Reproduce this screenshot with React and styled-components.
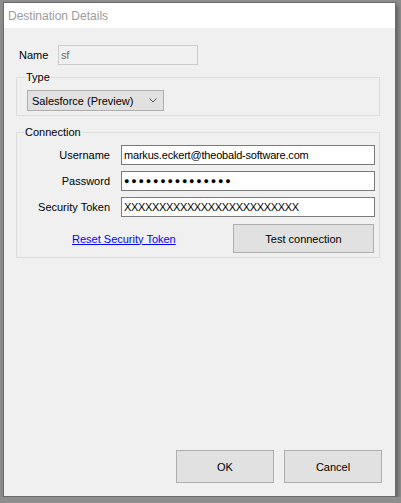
import React from "react";
import styled, { createGlobalStyle } from "styled-components";

const GlobalStyle = createGlobalStyle`
  html, body {
    margin: 0;
    padding: 0;
    background: #8e8e8e;
  }
  body {
    font-family: "Liberation Sans", Arial, sans-serif;
    font-size: 11px;
    color: #000000;
  }
`;

const Window = styled.div`
  margin: 2px 0 0 3px;
  width: 393px;
  height: 495px;
  border: 1px solid #6b6b6b;
  box-sizing: border-box;
  display: flex;
  flex-direction: column;
  box-shadow: 2px 3px 4px rgba(60, 60, 60, 0.6);
`;

const TitleBar = styled.div`
  height: 25px;
  background: #ffffff;
  display: flex;
  align-items: center;
  padding-left: 4px;
  font-size: 12px;
  color: #9b9b9b;
  flex-shrink: 0;
`;

const Client = styled.div`
  flex: 1;
  background: #f0f0f0;
  display: flex;
  flex-direction: column;
  padding: 17px 0 0 12px;
`;

const NameRow = styled.div`
  display: flex;
  align-items: center;
  padding-left: 3px;
`;

const NameLabel = styled.span`
  width: 39px;
`;

const TextBox = styled.input`
  box-sizing: border-box;
  width: ${(p) => p.$width || 254}px;
  height: 20px;
  margin: 0;
  padding: 0 2px;
  font-family: "Liberation Sans", Arial, sans-serif;
  font-size: ${(p) => (p.$dots ? "9px" : "11px")};
  letter-spacing: ${(p) => (p.$dots ? "1.8px" : p.$tight ? "-0.35px" : "-0.2px")};
  color: ${(p) => (p.disabled ? "#6d6d6d" : "#000000")};
  background: ${(p) => (p.disabled ? "#f0f0f0" : "#ffffff")};
  border: 1px solid ${(p) => (p.disabled ? "#cccccc" : "#7a7a7a")};
  outline: none;
`;

const Group = styled.div`
  position: relative;
  box-sizing: border-box;
  width: 364px;
  height: ${(p) => p.$height}px;
  margin-top: ${(p) => p.$top}px;
  border: 1px solid #dcdcdc;
`;

const Legend = styled.span`
  position: absolute;
  top: -8px;
  left: ${(p) => p.$left}px;
  padding: 0 1px;
  background: #f0f0f0;
  line-height: 14px;
`;

const Select = styled.div`
  box-sizing: border-box;
  width: 137px;
  height: 21px;
  margin: 12px 0 0 10px;
  background: #e1e1e1;
  border: 1px solid #adadad;
  display: flex;
  align-items: center;
  justify-content: space-between;
  padding: 0 6px 0 4px;
`;

const FieldGrid = styled.div`
  display: grid;
  grid-template-columns: 93px 254px;
  column-gap: 11px;
  row-gap: 6px;
  margin-top: 12px;
  align-items: center;
`;

const FieldLabel = styled.span`
  text-align: right;
`;

const ActionRow = styled.div`
  display: flex;
  align-items: center;
  margin-top: 7px;
`;

const Link = styled.a`
  margin-left: 55px;
  color: #0000ff;
  text-decoration: underline;
  width: 161px;
  cursor: pointer;
`;

const Button = styled.button`
  box-sizing: border-box;
  width: ${(p) => p.$width}px;
  height: ${(p) => p.$height}px;
  margin: 0;
  background: #e1e1e1;
  border: 1px solid #adadad;
  font-family: "Liberation Sans", Arial, sans-serif;
  font-size: 11px;
  color: #000000;
  padding: 0;
`;

const Footer = styled.div`
  margin-top: auto;
  margin-bottom: 13px;
  margin-right: 13px;
  display: flex;
  justify-content: flex-end;
  gap: 10px;
`;

const Chevron = () => (
  <svg width="8" height="5" viewBox="0 0 8 5">
    <polyline points="0.5,0.5 4,4 7.5,0.5" fill="none" stroke="#505050" strokeWidth="1" />
  </svg>
);

const App = () => {
  return (
    <>
      <GlobalStyle />
      <Window>
        <TitleBar>Destination Details</TitleBar>
        <Client>
          <NameRow>
            <NameLabel>Name</NameLabel>
            <TextBox $width={140} disabled defaultValue="sf" />
          </NameRow>

          <Group $top={12} $height={39}>
            <Legend $left={8}>Type</Legend>
            <Select>
              <span>Salesforce (Preview)</span>
              <Chevron />
            </Select>
          </Group>

          <Group $top={16} $height={126}>
            <Legend $left={7}>Connection</Legend>
            <FieldGrid>
              <FieldLabel>Username</FieldLabel>
              <TextBox readOnly defaultValue="markus.eckert@theobald-software.com" />
              <FieldLabel>Password</FieldLabel>
              <TextBox $dots readOnly defaultValue="●●●●●●●●●●●●●●●" />
              <FieldLabel>Security Token</FieldLabel>
              <TextBox $tight readOnly defaultValue="XXXXXXXXXXXXXXXXXXXXXXXXX" />
            </FieldGrid>
            <ActionRow>
              <Link>Reset Security Token</Link>
              <Button $width={141} $height={29}>Test connection</Button>
            </ActionRow>
          </Group>

          <Footer>
            <Button $width={98} $height={33}>OK</Button>
            <Button $width={98} $height={33}>Cancel</Button>
          </Footer>
        </Client>
      </Window>
    </>
  );
};

export default App;
